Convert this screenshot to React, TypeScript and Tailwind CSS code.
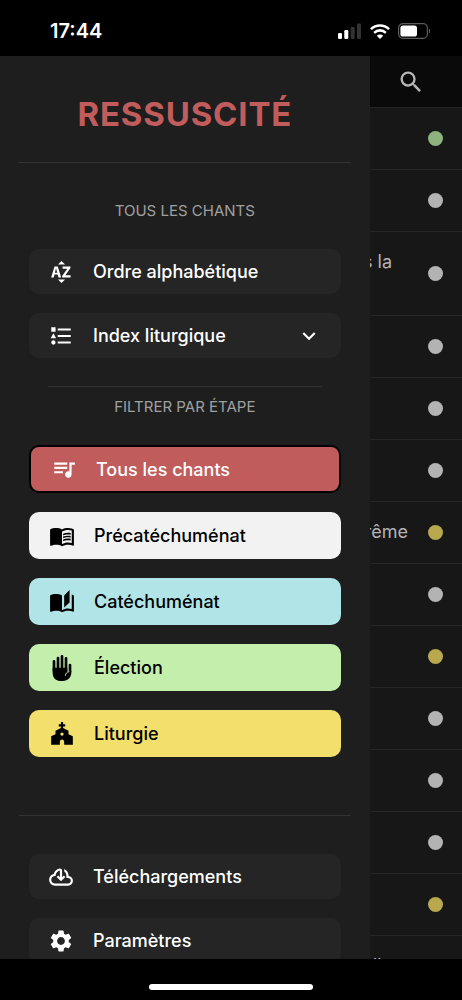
import type { ReactNode } from 'react'
import {
    MdAutoStories,
    MdChurch,
    MdExpandMore,
    MdMenuBook,
    MdQueueMusic,
    MdSearch,
    MdSettings,
} from 'react-icons/md'

type Song = { title?: string; dot: string; tall?: boolean; label: string }

const GREY = 'bg-[#b3b3b3]'
const YELLOW = 'bg-[#b8a94f]'
const GREEN = 'bg-[#8fb37e]'

const SONGS: Song[] = [
    { dot: GREEN, label: 'Élection' },
    { dot: GREY, label: 'Précatéchuménat' },
    { title: 'dans la', dot: GREY, tall: true, label: 'Précatéchuménat' },
    { dot: GREY, label: 'Précatéchuménat' },
    { dot: GREY, label: 'Précatéchuménat' },
    { dot: GREY, label: 'Précatéchuménat' },
    { title: 'Carême', dot: YELLOW, label: 'Liturgie' },
    { dot: GREY, label: 'Précatéchuménat' },
    { dot: YELLOW, label: 'Liturgie' },
    { dot: GREY, label: 'Précatéchuménat' },
    { dot: GREY, label: 'Précatéchuménat' },
    { dot: GREY, label: 'Précatéchuménat' },
    { dot: YELLOW, label: 'Liturgie' },
    { title: 'elle', dot: GREY, tall: true, label: 'Précatéchuménat' },
]

// 24px material glyphs that the icon package does not carry
const SORT_ALPHA =
    'M9.25 5 12.5 1.75 15.75 5H9.25M15.75 19 12.5 22.25 9.25 19H15.75M8.89 14.3H6L5.28 17H2.91L6 7H9L12.13 17H9.67L8.89 14.3M6.33 12.68H8.56L7.93 10.56 7.67 9.59 7.42 8.63H7.39L7.17 9.6 6.93 10.58 6.33 12.68M13.05 17V15.74L17.8 8.97V8.91H13.5V7H20.73V8.34L16.09 15V15.08H20.8V17H13.05Z'
const LIST_TYPE =
    'M5 9.5 7.5 14h-5L5 9.5M3 4h4v4H3V4m2 16a2 2 0 0 0 2-2 2 2 0 0 0-2-2 2 2 0 0 0-2 2 2 2 0 0 0 2 2M9 5v2h12V5H9m0 14h12v-2H9v2m0-6h12v-2H9v2z'
const CLOUD_DOWNLOAD =
    'M6.5 20Q4.22 20 2.61 18.43 1 16.85 1 14.58 1 12.63 2.17 11.1 3.35 9.57 5.25 9.15 5.68 7.35 7.38 5.73 9.07 4.1 11 4.1 11.83 4.1 12.41 4.69 13 5.28 13 6.1V12.15L14.6 10.6 16 12 12 16 8 12 9.4 10.6 11 12.15V6.1Q9.1 6.45 8.05 7.94 7 9.43 7 11H6.5Q5.05 11 4.03 12.03 3 13.05 3 14.5 3 15.95 4.03 17 5.05 18 6.5 18H18.5Q19.55 18 20.27 17.27 21 16.55 21 15.5 21 14.45 20.27 13.73 19.55 13 18.5 13H17V11Q17 9.8 16.45 8.76 15.9 7.73 15 7V4.68Q16.85 5.55 17.93 7.26 19 9 19 11 20.73 11.2 21.86 12.5 23 13.78 23 15.5 23 17.38 21.69 18.69 20.38 20 18.5 20Z'

export default function App() {
    return (
        <div className="flex h-screen flex-col overflow-hidden bg-black font-['Inter',sans-serif] text-white">
            <StatusBar />

            <div className="flex min-h-0 flex-1">
                <Drawer />
                <SongList />
            </div>

            {/* Home indicator */}
            <div className="flex h-[41px] shrink-0 items-end justify-center pb-[10px]">
                <div className="h-[6px] w-[164px] rounded-full bg-white" />
            </div>
        </div>
    )
}

function StatusBar() {
    return (
        <header className="flex h-14 shrink-0 items-end justify-between pr-[31px] pb-3 pl-[50px]">
            <span className="text-[20px] leading-[26px] font-semibold">17:44</span>
            <div className="flex h-[26px] items-center gap-2">
                <svg width="24" height="16" viewBox="0 0 24 16" fill="#fff">
                    <rect x="0" y="10" width="4" height="6" rx="1.2" />
                    <rect x="6.3" y="7" width="4" height="9" rx="1.2" />
                    <rect x="12.7" y="4" width="4" height="12" rx="1.2" fill="#333" />
                    <rect x="19" y="0.5" width="4" height="15.5" rx="1.2" fill="#333" />
                </svg>
                <svg width="20" height="15" viewBox="0 0 20 15" fill="none" stroke="#fff" strokeWidth="2.6">
                    <path d="M1 5.2a12.8 12.8 0 0 1 18 0" />
                    <path d="M4.2 8.8a8.2 8.2 0 0 1 11.6 0" />
                    <path d="M10 15 6.8 11.7a4.6 4.6 0 0 1 6.4 0z" fill="#fff" stroke="none" />
                </svg>
                <svg width="33" height="16" viewBox="0 0 33 16">
                    <rect x="0.6" y="0.6" width="28.8" height="14.8" rx="4.4" fill="none" stroke="#5c5c5c" strokeWidth="1.2" />
                    <rect x="2.4" y="2.4" width="16.6" height="11.2" rx="2.6" fill="#fff" />
                    <path d="M31 5.5c1.6.6 1.6 4.4 0 5z" fill="#5c5c5c" />
                </svg>
            </div>
        </header>
    )
}

function Drawer() {
    return (
        <nav className="w-4/5 shrink-0 overflow-hidden bg-[#1e1e1e]">
            <h1 className="mx-[19px] h-[107px] border-b border-[#333] pt-9 text-center text-[33px] leading-[44px] font-bold tracking-wide text-[#c15c5c]">
                RESSUSCITÉ
            </h1>

            <div className="px-[29px]">
                <SectionTitle className="pt-[38px] pb-7">TOUS LES CHANTS</SectionTitle>
                <div className="flex flex-col gap-[19px]">
                    <MenuButton icon={<Glyph d={SORT_ALPHA} />}>Ordre alphabétique</MenuButton>
                    <MenuButton icon={<Glyph d={LIST_TYPE} />} trailing={<MdExpandMore />}>
                        Index liturgique
                    </MenuButton>
                </div>

                <hr className="mx-[19px] mt-7 border-[#333]" />
                <SectionTitle className="pt-[10px] pb-7">FILTRER PAR ÉTAPE</SectionTitle>

                <div className="flex flex-col gap-[19px]">
                    <StepButton icon={<MdQueueMusic />} className="h-[48px] border-2 border-black bg-[#c15c5c] text-white" active>
                        Tous les chants
                    </StepButton>
                    <StepButton icon={<MdMenuBook />} className="h-[47px] bg-[#f2f2f2] text-black">
                        Précatéchuménat
                    </StepButton>
                    <StepButton icon={<MdAutoStories />} className="h-[47px] bg-[#b0e4e6] text-black">
                        Catéchuménat
                    </StepButton>
                    <StepButton icon={<HandIcon />} className="h-[47px] bg-[#c4eeab] text-black">
                        Élection
                    </StepButton>
                    <StepButton icon={<MdChurch />} className="h-[47px] bg-[#f3df6c] text-black">
                        Liturgie
                    </StepButton>
                </div>
            </div>

            <hr className="mx-[19px] mt-[58px] border-[#333]" />
            <div className="flex flex-col gap-[19px] px-[29px] pt-[38px]">
                <MenuButton icon={<Glyph d={CLOUD_DOWNLOAD} />}>Téléchargements</MenuButton>
                <MenuButton icon={<MdSettings />}>Paramètres</MenuButton>
            </div>
        </nav>
    )
}

function SectionTitle({ children, className }: { children: ReactNode; className: string }) {
    return (
        <h2 className={`text-center text-[15px] leading-5 text-[#a0a0a0] ${className}`}>
            {children}
        </h2>
    )
}

function MenuButton({ icon, trailing, children }: { icon: ReactNode; trailing?: ReactNode; children: ReactNode }) {
    return (
        <button
            type="button"
            className="flex h-[45px] w-full items-center gap-[19px] rounded-[10px] bg-[#252525] px-[19px] text-left text-[18px] font-medium"
        >
            <span className="text-[26px]">{icon}</span>
            <span className="flex-1">{children}</span>
            {trailing && <span className="text-[26px]">{trailing}</span>}
        </button>
    )
}

function StepButton({
    icon,
    className,
    active = false,
    children,
}: {
    icon: ReactNode
    className: string
    active?: boolean
    children: ReactNode
}) {
    return (
        <button
            type="button"
            aria-pressed={active}
            className={`flex w-full items-center gap-[19px] rounded-[10px] px-5 text-left text-[18px] font-medium ${className}`}
        >
            <span className="text-[26px]">{icon}</span>
            <span>{children}</span>
        </button>
    )
}

function SongList() {
    return (
        <main className="flex min-w-0 flex-1 flex-col overflow-hidden bg-[#171717]">
            <div className="flex h-[51px] shrink-0 items-center justify-end bg-[#0a0a0a] pr-[37px]">
                <button type="button" aria-label="Rechercher" className="text-[28px] text-[#b8b8b8]">
                    <MdSearch />
                </button>
            </div>
            <ul>
                {SONGS.map((song, i) => (
                    <li
                        key={i}
                        className={`flex justify-end gap-5 border-t border-[#262626] pr-[19px] text-[18px] text-[#b3b3b3] ${
                            song.tall ? 'h-[84px]' : 'h-[62px]'
                        }`}
                    >
                        <span className={`py-[18px] leading-6 whitespace-nowrap ${song.tall ? 'pr-4' : ''}`}>
                            {song.title}
                        </span>
                        <span
                            role="img"
                            aria-label={song.label}
                            className={`size-[15px] shrink-0 self-center rounded-full ${song.dot}`}
                        />
                    </li>
                ))}
            </ul>
        </main>
    )
}

function Glyph({ d }: { d: string }) {
    return (
        <svg width="1em" height="1em" viewBox="0 0 24 24" fill="currentColor">
            <path d={d} />
        </svg>
    )
}

// Raised palm, thumb folded in on the right
function HandIcon() {
    return (
        <svg width="1em" height="1em" viewBox="0 0 78 78" fill="none" strokeLinecap="round">
            <path
                d="M15 19v30M27 9v38M39 4v42M51 10v36M63 30v20"
                stroke="currentColor"
                strokeWidth="8"
            />
            <path
                d="M11 38h44v12l4-2h8v4c0 16-10 26-26 26h-4c-16 0-26-9-26-25z"
                fill="currentColor"
            />
            <path d="M60 50c-6 1-10 5-11 11" stroke="#c4eeab" strokeWidth="3" />
        </svg>
    )
}
